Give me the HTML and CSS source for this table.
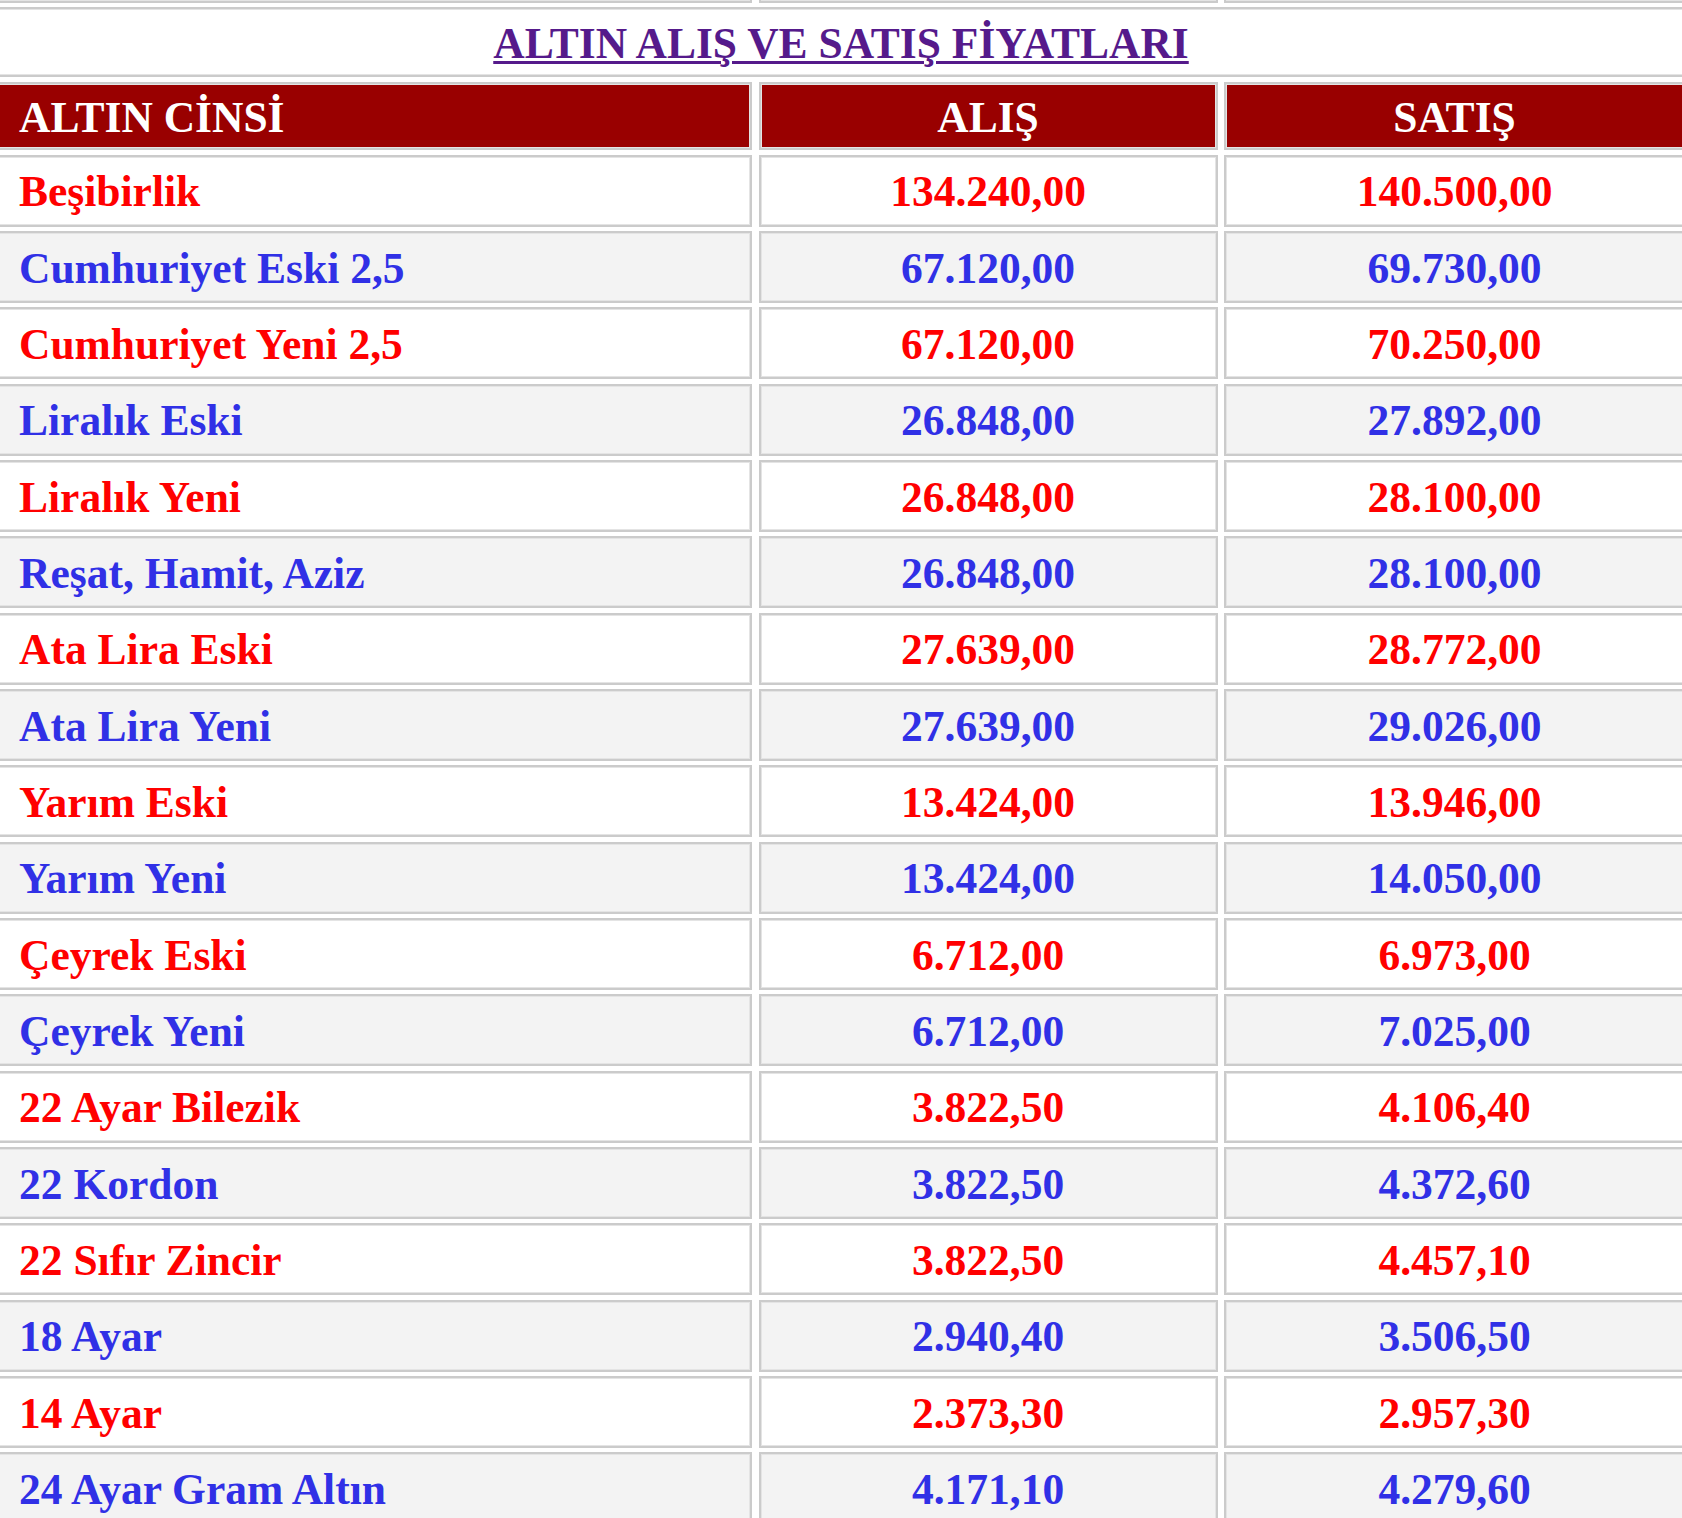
FILE: index.html
```html
<!DOCTYPE html>
<html lang="tr">
<head>
<meta charset="utf-8">
<title>Altın Alış ve Satış Fiyatları</title>
<link rel="stylesheet" href="styles.css">
</head>
<body>
<div class="board">
  <div class="row row-top">
    <div class="cell"></div><div class="cell"></div><div class="cell"></div>
  </div>
  <div class="row row-title">
    <div class="cell cell-title"><a class="title" href="#">ALTIN ALIŞ VE SATIŞ FİYATLARI</a></div>
  </div>
  <div class="row row-head">
    <div class="cell name">ALTIN CİNSİ</div>
    <div class="cell num">ALIŞ</div>
    <div class="cell num">SATIŞ</div>
  </div>
  <div class="row data red"><div class="cell name">Beşibirlik</div><div class="cell num">134.240,00</div><div class="cell num">140.500,00</div></div>
  <div class="row data blue"><div class="cell name">Cumhuriyet Eski 2,5</div><div class="cell num">67.120,00</div><div class="cell num">69.730,00</div></div>
  <div class="row data red"><div class="cell name">Cumhuriyet Yeni 2,5</div><div class="cell num">67.120,00</div><div class="cell num">70.250,00</div></div>
  <div class="row data blue"><div class="cell name">Liralık Eski</div><div class="cell num">26.848,00</div><div class="cell num">27.892,00</div></div>
  <div class="row data red"><div class="cell name">Liralık Yeni</div><div class="cell num">26.848,00</div><div class="cell num">28.100,00</div></div>
  <div class="row data blue"><div class="cell name">Reşat, Hamit, Aziz</div><div class="cell num">26.848,00</div><div class="cell num">28.100,00</div></div>
  <div class="row data red"><div class="cell name">Ata Lira Eski</div><div class="cell num">27.639,00</div><div class="cell num">28.772,00</div></div>
  <div class="row data blue"><div class="cell name">Ata Lira Yeni</div><div class="cell num">27.639,00</div><div class="cell num">29.026,00</div></div>
  <div class="row data red"><div class="cell name">Yarım Eski</div><div class="cell num">13.424,00</div><div class="cell num">13.946,00</div></div>
  <div class="row data blue"><div class="cell name">Yarım Yeni</div><div class="cell num">13.424,00</div><div class="cell num">14.050,00</div></div>
  <div class="row data red"><div class="cell name">Çeyrek Eski</div><div class="cell num">6.712,00</div><div class="cell num">6.973,00</div></div>
  <div class="row data blue"><div class="cell name">Çeyrek Yeni</div><div class="cell num">6.712,00</div><div class="cell num">7.025,00</div></div>
  <div class="row data red"><div class="cell name">22 Ayar Bilezik</div><div class="cell num">3.822,50</div><div class="cell num">4.106,40</div></div>
  <div class="row data blue"><div class="cell name">22 Kordon</div><div class="cell num">3.822,50</div><div class="cell num">4.372,60</div></div>
  <div class="row data red"><div class="cell name">22 Sıfır Zincir</div><div class="cell num">3.822,50</div><div class="cell num">4.457,10</div></div>
  <div class="row data blue"><div class="cell name">18 Ayar</div><div class="cell num">2.940,40</div><div class="cell num">3.506,50</div></div>
  <div class="row data red"><div class="cell name">14 Ayar</div><div class="cell num">2.373,30</div><div class="cell num">2.957,30</div></div>
  <div class="row data blue"><div class="cell name">24 Ayar Gram Altın</div><div class="cell num">4.171,10</div><div class="cell num">4.279,60</div></div>
</div>
</body>
</html>
```
FILE: styles.css
```css
html, body {
  margin: 0;
  padding: 0;
  background: #ffffff;
  overflow: hidden;
}

body {
  font-family: "Liberation Serif", "Times New Roman", serif;
  font-weight: bold;
  font-size: 43.5px;
}

.board {
  display: flex;
  flex-direction: column;
  gap: 4.33px;
  width: 1688px;
  margin: -37px 0 0 -3px;
}

.row {
  display: grid;
  grid-template-columns: 755px 459px 461px;
  column-gap: 6.5px;
}

.cell {
  display: flex;
  align-items: center;
  box-sizing: border-box;
  border: 2px solid #cbcbcb;
  box-shadow: inset 0 0 0 1px #e4e4e4;
  white-space: nowrap;
  line-height: 1;
  padding-top: 3px;
}

.row-top {
  height: 40px;
}

.row-title {
  grid-template-columns: 1fr;
  height: 70px;
}

.cell-title {
  justify-content: center;
  padding-top: 2px;
}

.title {
  color: #551a8b;
  text-decoration: underline;
  text-decoration-thickness: 3px;
  text-underline-offset: 3px;
}

.row-head {
  height: 68.67px;
}

.row-head .cell {
  background: #990000;
  color: #ffffff;
}

.data {
  height: 72px;
}

.name {
  padding-left: 20px;
}

.num {
  justify-content: center;
}

.red .cell {
  background: #ffffff;
  color: #ff0000;
}

.blue .cell {
  background: #f3f3f3;
  color: #3030e6;
}
```
